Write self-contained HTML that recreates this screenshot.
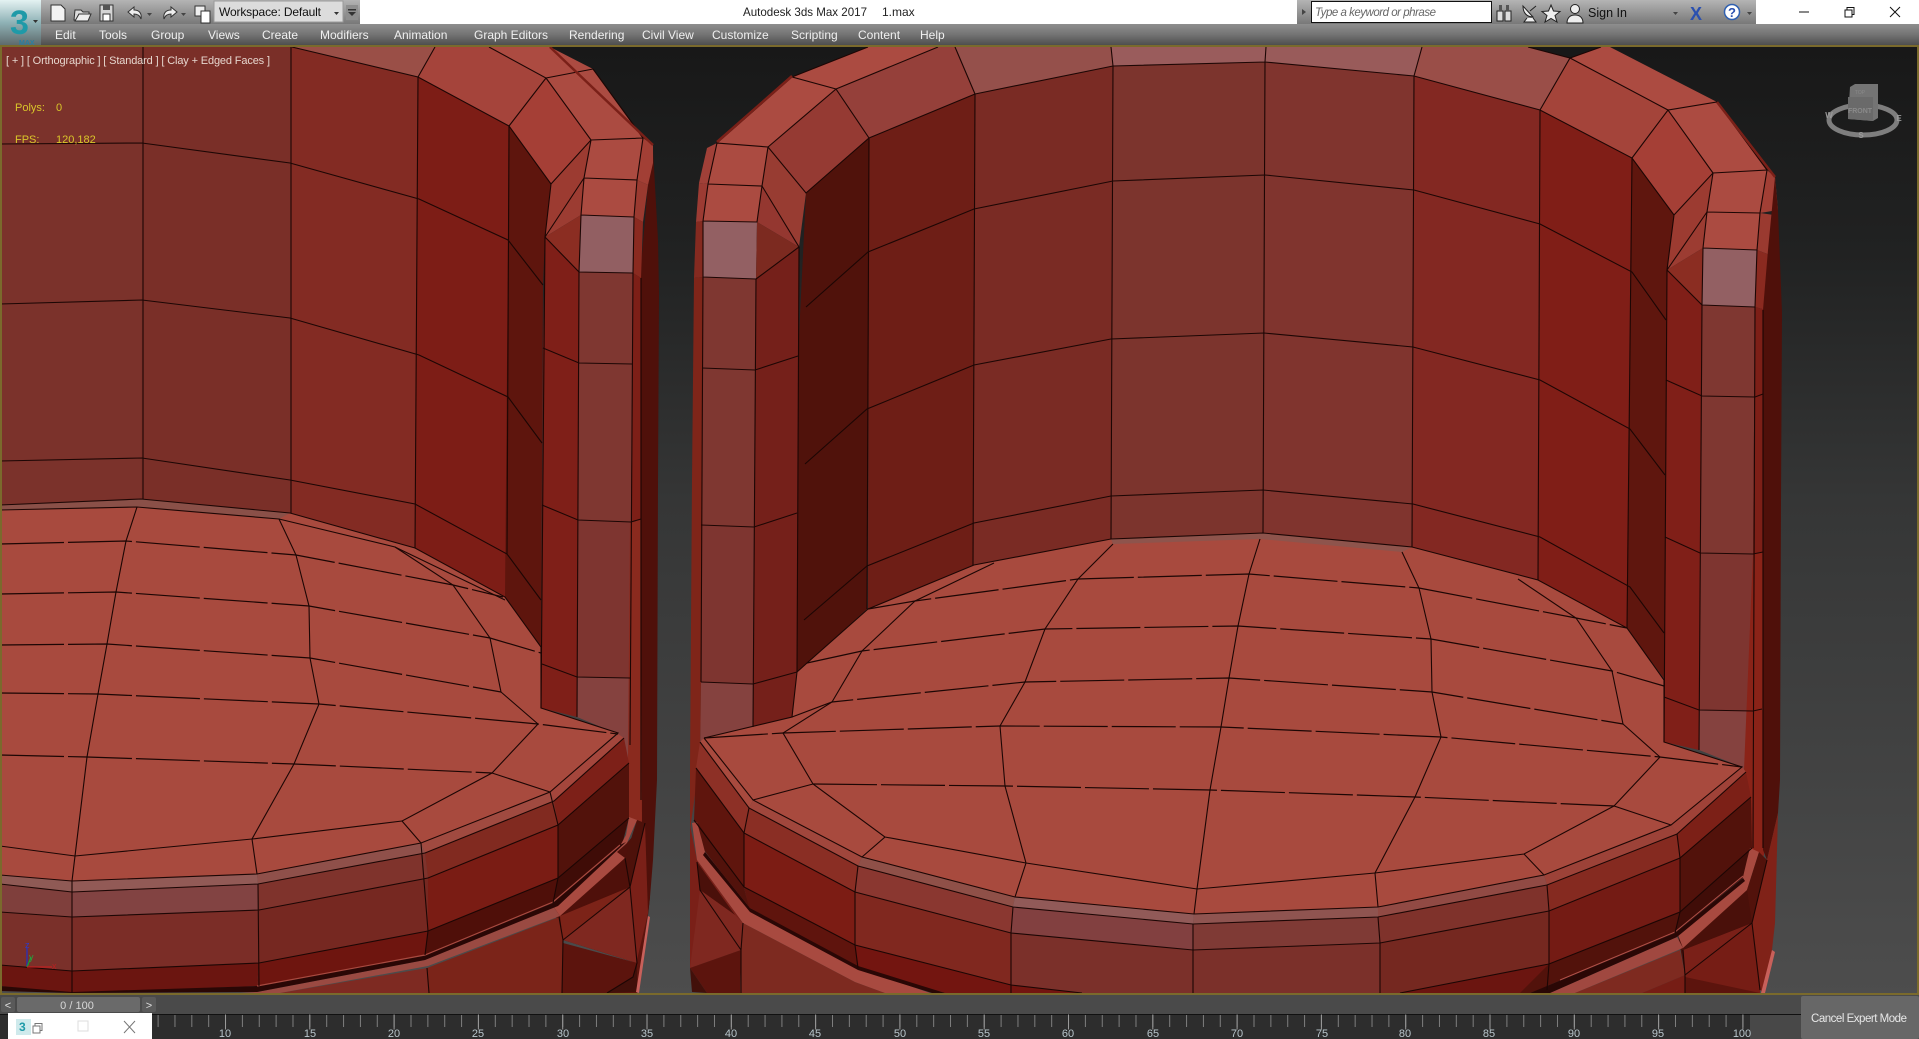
<!DOCTYPE html>
<html><head><meta charset="utf-8"><title>Autodesk 3ds Max 2017</title>
<style>
html,body{margin:0;padding:0;background:#4a4a4a;width:1919px;height:1039px;overflow:hidden}
svg{display:block;font-family:"Liberation Sans",sans-serif}
.l{fill:none;stroke:#1c0604;stroke-width:1.1}
.d{fill:none;stroke:#1c0604;stroke-width:1.2;stroke-dasharray:64 4}
.m{fill:#f0f0f0;font-size:12px}
.t{fill:#b9c6cc;font-size:11px;text-anchor:middle}
</style></head><body>
<svg width="1919" height="1039" viewBox="0 0 1919 1039" xmlns="http://www.w3.org/2000/svg">
<defs>
<linearGradient id="bg" x1="0" y1="0" x2="0" y2="1"><stop offset="0" stop-color="#181818"/><stop offset=".22" stop-color="#212222"/><stop offset=".48" stop-color="#353636"/><stop offset="1" stop-color="#4d4d4d"/></linearGradient>
<linearGradient id="mb" x1="0" y1="0" x2="0" y2="1"><stop offset="0" stop-color="#8e8e8e"/><stop offset=".5" stop-color="#747474"/><stop offset="1" stop-color="#4e4e4e"/></linearGradient>
<linearGradient id="tb" x1="0" y1="0" x2="0" y2="1"><stop offset="0" stop-color="#b4b4b4"/><stop offset="1" stop-color="#787878"/></linearGradient>
<linearGradient id="lg" x1="0" y1="0" x2="0" y2="1"><stop offset="0" stop-color="#e4f2f2"/><stop offset=".5" stop-color="#8fb2b6"/><stop offset="1" stop-color="#5e6a6c"/></linearGradient>
</defs>
<rect width="1919" height="1039" fill="#4a4a4a"/>
<rect x="0" y="45" width="1919" height="950" fill="url(#bg)"/>

<!-- LEFT CHAIR walls -->
<polygon fill="#7b322b" points="0,47 143,47 143,499 0,505"/>
<polygon fill="#7a2f28" points="143,47 291,47 291,513 141,499"/>
<polygon fill="#832b23" points="291,47 418,77 415,548 291,513"/>
<polygon fill="#7d1d16" points="418,77 509,126 507,554 505,597 415,548"/>
<polygon fill="#5e150d" points="509,126 551,184 545,237 543,285 541,650 505,597"/>
<polygon fill="#9a4f47" points="291,47 435,47 418,77"/>
<polygon fill="#a5443b" points="418,77 435,47 489,47 546,78 509,126"/>
<polygon fill="#ac4b41" points="489,47 550,47 593,69 546,78"/>
<polygon fill="#a53f36" points="509,126 546,78 591,140 551,184"/>
<polygon fill="#ab4b41" points="546,78 593,69 643,138 591,140"/>
<polygon fill="#7f1f18" points="545,237 579,272 577,717 541,708 543,348"/>
<polygon fill="#9c3b31" points="551,184 591,140 584,178 545,237"/>
<polygon fill="#9c3c32" points="545,237 584,178 581,215"/>
<polygon fill="#8b2d22" points="545,237 581,215 579,272"/>
<polygon fill="#ab4b41" points="591,140 643,138 637,180 584,178"/>
<polygon fill="#ab4b41" points="584,178 637,180 634,217 581,215"/>
<polygon fill="#925f62" points="581,215 634,217 633,273 579,272"/>
<polygon fill="#7f3731" points="579,272 633,273 631,522 578,520"/>
<polygon fill="#7e3530" points="578,520 631,522 630,678 577,677"/>
<polygon fill="#85423f" points="577,677 630,678 632,770 618,734 577,717"/>
<polygon fill="#4f100a" points="648,185 653,150 658,240 659,293 658,480 657,780 653,860 650,897 648,915 640,850 640,278"/>
<polygon fill="#a23f35" points="637,180 643,138 653,145 653,163 648,185"/>
<polygon fill="#9a3a30" points="634,217 637,180 648,185 643,222"/>
<polygon fill="#8a2a20" points="633,273 634,217 643,222 641,278"/>
<polygon fill="#7d1f17" points="631,522 633,273 641,278 641,519"/>
<polygon fill="#8a2a1e" points="630,522 641,519 642,825 628,820 628,760"/>
<!-- left seat -->
<polygon fill="#a84a3e" points="0,505 141,499 290,513 415,548 505,597 541,647 541,708 618,733 550,792 421,843 257,874 72,881 0,875"/>
<polygon fill="#8a5048" points="0,505 141,499 290,513 279,519 137,507 0,510"/>
<!-- left rims -->
<polygon fill="#8f5a55" points="0,875 72,881 72,892 0,884"/><polygon fill="#925a56" points="72,881 257,874 258,884 72,892"/><polygon fill="#8f504a" points="257,874 421,843 425,853 258,884"/><polygon fill="#a04a40" points="421,843 550,792 554,801 425,853"/><polygon fill="#a4463c" points="550,792 618,734 624,738 554,801"/>
<polygon fill="#7f3f3c" points="0,884 72,892 72,917 0,912"/><polygon fill="#824342" points="72,892 258,884 259,910 72,917"/><polygon fill="#7f332c" points="258,884 425,853 428,878 259,910"/><polygon fill="#812a20" points="425,853 554,801 558,825 428,878"/><polygon fill="#7d2018" points="554,801 624,738 629,763 558,825"/>
<polygon fill="#7a302a" points="0,912 72,917 72,971 0,965"/><polygon fill="#7b2d27" points="72,917 259,910 259,963 72,971"/><polygon fill="#762821" points="259,910 428,878 428,931 259,963"/><polygon fill="#7a1c14" points="428,878 558,825 558,878 428,931"/><polygon fill="#52120b" points="558,825 629,763 629,818 558,878"/>
<polygon fill="#6b1510" points="0,965 72,971 259,963 257,986 72,993 0,986"/><polygon fill="#6e150f" points="259,963 428,931 425,955 257,986"/><polygon fill="#4f0f09" points="428,931 558,878 553,903 425,955"/><polygon fill="#3f0c07" points="558,878 629,818 622,845 553,903"/>
<!-- left base -->
<polygon fill="#4f100a" points="553,906 625,845 645,823 650,897 648,915 637,963 563,940"/>
<polygon fill="#5c140d" points="630,887 648,913 637,993 607,993 633,977"/>
<polygon fill="#7e2a22" points="280,993 427,968 429,993"/>
<polygon fill="#7b2419" points="429,993 427,968 559,917 563,940 562,993"/>
<polygon fill="#7c2318" points="560,916 630,887 563,940"/>
<polygon fill="#4f100a" points="625,858 630,887 570,910 560,916"/>
<polygon fill="#7f2820" points="563,940 630,887 637,963"/>
<polygon fill="#5c140d" points="563,943 637,963 633,977 607,993 562,993"/>
<polygon fill="#42100a" points="637,963 637,992 607,993 633,977"/>
<polygon fill="#7a2018" points="630,887 645,823 648,913 637,960"/>
<polygon fill="#4d110a" points="645,823 630,887 625,858 637,820"/>
<polygon fill="#a84a40" points="629,817 637,820 627,843 617,852 625,858 560,916 553,906 620,846 626,835"/>
<polygon fill="#9a4a42" points="553,906 560,916 428,966 280,993 240,993 257,992 425,960"/>
<polygon fill="#2a0705" points="0,986 72,992 257,986 425,955 553,903 620,845 626,842 558,906 425,960 257,992 72,993 0,991"/>
<path d="M257 986L425 955L553 902L620 845" fill="none" stroke="#a84a40" stroke-width="1.200"/>
<polygon fill="#c8605a" points="648,916 650,917 639,993 636,992"/>
<!-- left lines -->
<g class="l">
<path d="M143 47V499M291 47V513M418 77L415 548M509 126L507 554M545 237L541 708M579 272L577 717M633 273L630 745M641 278V800"/>
<path d="M292 47L418 77L509 126M418 77L435 47M489 47L546 78L509 126M546 78L593 69M546 78L591 140L551 184L509 126M591 140L643 138M593 69L643 138M591 140L584 178L581 215L579 272M643 138L637 180L634 217L633 273M584 178L637 180M581 215L634 217M579 272L633 273M584 178L545 237L551 184M545 237L579 272M550 47L653 145"/>
<path d="M0 144L142 143L290 163L419 199L508 240L543 285M0 304L142 300L290 318L419 355L508 397L542 443M0 461L142 458L290 480L415 504L507 554L541 600M543 348L579 363L632 364M542 505L578 520L631 522L641 519M542 664L577 677L630 678"/>
<path d="M0 505L141 499L290 513L415 548L505 597L541 647V708L618 733L550 792L421 843L257 874L72 881L0 875"/>
<path d="M137 507L126 541L116 592L107 644L98 694L87 757L75 856L72 881M279 519L296 555L309 606L310 658L319 704L294 764L252 839L257 874M395 547L453 585L490 638L501 692L538 724L492 773L402 821L421 843"/>
<path d="M492 773L550 792M0 846L75 856L252 839L402 821M0 884L72 892L258 884L425 853L554 801L624 738M0 912L72 917L259 910L428 878L558 825L629 763M0 965L72 971L259 963L428 931L558 878L629 818M72 881V993M258 884L259 986M421 843L428 931L425 955M427 968L429 993M550 792L558 825V878L553 903M559 917L563 940L562 993M563 940L630 887M630 887L637 963L633 977L607 993M625 858L630 887L645 823"/>
<path d="M0 510L137 507L279 519L395 547L505 600"/>
</g>
<g class="d">
<path d="M0 544L126 541L296 555L453 585L503 597M0 594L116 592L309 606L490 638L541 653M0 645L107 644L310 658L501 692M0 693L98 694L319 704L538 724L618 734M0 755L87 757L294 764L492 773"/>
</g>

<!-- RIGHT CHAIR -->
<polygon fill="#50120b" points="806,193 869,138 867,609 807,663 795,715 798,356"/>
<polygon fill="#6e1e16" points="869,138 975,94 973,565 868,609"/>
<polygon fill="#7a2b24" points="975,94 1113,66 1111,539 973,565"/>
<polygon fill="#7c342d" points="1113,66 1265,62 1263,533 1111,539"/>
<polygon fill="#80342e" points="1265,62 1414,76 1412,547 1263,533"/>
<polygon fill="#832822" points="1414,76 1540,110 1538,580 1412,547"/>
<polygon fill="#801e17" points="1540,110 1632,158 1627,628 1538,580"/>
<polygon fill="#5f160e" points="1632,158 1674,215 1667,270 1665,680 1627,628"/>
<!-- top -->
<polygon fill="#95403a" points="836,89 869,138 975,94 955,47 938,47"/>
<polygon fill="#ab4b41" points="792,77 868,47 938,47 836,89"/>
<polygon fill="#95504b" points="955,47 975,94 1113,66 1111,47"/>
<polygon fill="#9a5c5c" points="1113,66 1265,62 1266,47 1111,47"/>
<polygon fill="#995b5a" points="1265,62 1414,76 1422,47 1266,47"/>
<polygon fill="#9a4e48" points="1414,76 1540,110 1570,58 1528,47 1422,47"/>
<polygon fill="#a4443a" points="1540,110 1632,158 1668,110 1570,58"/>
<polygon fill="#ac4b41" points="1570,58 1601,47 1610,47 1717,102 1668,110"/>
<polygon fill="#953a33" points="836,89 768,147 806,193 869,138"/>
<polygon fill="#ab4b41" points="836,89 792,77 717,143 768,147"/>
<polygon fill="#ab4b41" points="717,143 768,147 762,186 708,184"/>
<polygon fill="#ab4b41" points="708,184 762,186 757,222 703,221"/>
<polygon fill="#936063" points="703,221 757,222 756,279 703,277"/>
<polygon fill="#7f3731" points="703,277 756,279 754,527 701,525"/>
<polygon fill="#7e3530" points="701,525 754,527 753,684 701,682"/>
<polygon fill="#85423f" points="701,682 753,684 753,727 704,738 700,760"/>
<polygon fill="#983c32" points="768,147 806,193 799,247 762,186"/>
<polygon fill="#943730" points="762,186 799,247 757,222"/>
<polygon fill="#7c2a20" points="757,222 799,247 756,279"/>
<polygon fill="#75201a" points="756,279 799,247 797,672 792,717 753,727"/>
<polygon fill="#a04038" points="717,143 707,148 699,183 708,184"/>
<polygon fill="#9c3b33" points="708,184 699,183 696,222 703,221"/>
<polygon fill="#852a20" points="703,221 696,222 694,278 703,277"/>
<polygon fill="#7f2519" points="703,277 694,278 692,480 690,770 690,830 700,760 701,682"/>
<!-- right arm -->
<polygon fill="#801f18" points="1667,270 1702,305 1699,750 1664,742"/>
<polygon fill="#a53f36" points="1632,158 1668,110 1713,173 1674,215"/>
<polygon fill="#ac4b41" points="1668,110 1717,102 1767,170 1713,173"/>
<polygon fill="#ab4b41" points="1713,173 1767,170 1760,213 1707,212"/>
<polygon fill="#ab4b41" points="1707,212 1760,213 1757,250 1703,248"/>
<polygon fill="#936063" points="1703,248 1757,250 1755,307 1702,305"/>
<polygon fill="#7f3731" points="1702,305 1755,307 1753,554 1700,553"/>
<polygon fill="#7e3530" points="1700,553 1753,554 1753,711 1699,710"/>
<polygon fill="#85423f" points="1699,710 1753,711 1752,790 1742,767 1699,750"/>
<polygon fill="#9c3b31" points="1674,215 1713,173 1707,212 1667,270"/>
<polygon fill="#9c3c32" points="1667,270 1707,212 1703,248"/>
<polygon fill="#8b2d22" points="1667,270 1703,248 1702,305"/>
<polygon fill="#a23f35" points="1767,170 1775,177 1778,210 1760,213"/>
<polygon fill="#9a3a30" points="1760,213 1774,215 1770,255 1757,250"/>
<polygon fill="#8a2a20" points="1757,250 1770,255 1766,310 1755,307"/>
<polygon fill="#7d1f17" points="1755,307 1766,310 1763,552 1753,554"/>
<polygon fill="#8a2318" points="1744,770 1753,554 1763,552 1764,856 1748,850"/>
<polygon fill="#4f100a" points="1775,177 1778,210 1782,313 1781,500 1780,780 1778,813 1767,860 1763,850 1763,310 1768,250"/>
<!-- seat -->
<polygon fill="#a84a3e" points="704,738 792,717 797,672 807,663 868,609 974,565 1111,539 1263,533 1412,547 1538,580 1627,628 1664,680 1664,742 1742,767 1671,825 1544,875 1378,907 1194,914 1015,897 862,857 753,800"/>
<polygon fill="#8e544c" points="1111,539 1263,533 1412,547 1402,552 1260,539 1113,544"/>
<!-- rims -->
<polygon fill="#a84a3e" points="704,738 753,800 749,808 700,742"/><polygon fill="#a0463c" points="753,800 862,857 858,866 749,808"/><polygon fill="#8f5048" points="862,857 1015,897 1013,907 858,866"/><polygon fill="#915a58" points="1015,897 1194,914 1193,924 1013,907"/><polygon fill="#8f5450" points="1194,914 1378,907 1378,917 1193,924"/><polygon fill="#914a44" points="1378,907 1544,875 1547,885 1378,917"/><polygon fill="#9c4238" points="1544,875 1671,825 1677,834 1547,885"/><polygon fill="#9f4238" points="1671,825 1742,767 1746,772 1677,834"/>
<polygon fill="#8d3026" points="700,742 749,808 744,833 696,768"/><polygon fill="#8a2e24" points="749,808 858,866 855,892 744,833"/><polygon fill="#8a3730" points="858,866 1013,907 1011,933 855,892"/><polygon fill="#824040" points="1013,907 1193,924 1193,950 1011,933"/><polygon fill="#7f3a35" points="1193,924 1378,917 1380,943 1193,950"/><polygon fill="#7f322b" points="1378,917 1547,885 1549,911 1380,943"/><polygon fill="#852a20" points="1547,885 1677,834 1680,858 1549,911"/><polygon fill="#7c2017" points="1677,834 1746,772 1751,797 1680,858"/>
<polygon fill="#5f150d" points="696,768 744,833 744,887 694,820"/><polygon fill="#7c1c14" points="744,833 855,892 855,945 744,887"/><polygon fill="#80281f" points="855,892 1011,933 1011,985 855,945"/><polygon fill="#7b302a" points="1011,933 1193,950 1193,993 1011,993"/><polygon fill="#7b302a" points="1193,950 1380,943 1380,993 1193,993"/><polygon fill="#752820" points="1380,943 1549,911 1549,964 1400,993 1380,993"/><polygon fill="#741b14" points="1549,911 1680,858 1680,912 1549,964"/><polygon fill="#52120b" points="1680,858 1751,797 1752,848 1680,912"/>
<polygon fill="#731510" points="1011,985 1082,993 1011,993"/>
<polygon fill="#731510" points="855,945 1011,985 1011,993 945,993 858,968"/>
<polygon fill="#6b1510" points="1400,993 1549,964 1547,990 1520,993"/>
<polygon fill="#52120b" points="694,820 744,887 749,910 696,830"/>
<polygon fill="#5f140d" points="744,887 855,945 858,968 749,910"/>
<polygon fill="#52120b" points="1549,964 1680,912 1675,933 1530,993 1520,993"/>
<polygon fill="#400d08" points="1680,912 1752,848 1745,876 1675,933"/>
<!-- right chair bottom left -->
<polygon fill="#7a2018" points="690,825 697,860 743,923 741,950 690,968"/>
<polygon fill="#4a100a" points="697,862 735,915 700,890"/>
<polygon fill="#7f2820" points="700,890 735,915 743,923 741,950 690,968"/>
<polygon fill="#5c140d" points="690,968 741,950 740,993 707,993"/>
<polygon fill="#42100a" points="690,968 707,993 692,992"/>
<polygon fill="#52120b" points="698,823 745,893 750,910 704,850"/>
<polygon fill="#7d2a20" points="743,923 855,982 885,993 740,993 741,950"/>
<polygon fill="#a84a40" points="692,823 697,822 705,852 750,908 858,968 930,993 885,993 855,982 743,923 697,860"/>
<polygon fill="#2a0705" points="705,852 750,908 858,966 945,993 932,993 858,970 750,912 703,855"/>
<!-- right chair bottom right -->
<polygon fill="#4a100a" points="1678,935 1747,888 1760,880 1767,860 1752,923 1685,975"/>
<polygon fill="#a04840" points="1550,993 1677,937 1683,948 1575,993"/>
<polygon fill="#7e2a20" points="1575,993 1680,950 1685,975 1642,993"/>
<polygon fill="#761d15" points="1642,993 1685,975 1752,923 1760,990 1760,993"/>
<polygon fill="#7a2018" points="1683,950 1752,923 1685,975"/>
<polygon fill="#5c140d" points="1685,977 1760,993 1685,993"/>
<polygon fill="#4a100a" points="1683,948 1747,892 1752,923 1683,950"/>
<polygon fill="#a84a40" points="1750,848 1759,852 1747,890 1683,948 1678,935 1738,885 1743,877 1747,860"/>
<polygon fill="#2a0705" points="1530,993 1675,933 1743,878 1745,881 1677,937 1550,993"/>
<path d="M1560 980L1675 932L1743 876" fill="none" stroke="#b05048" stroke-width="1"/>
<polygon fill="#52120b" points="1759,852 1767,860 1752,923 1747,890"/>
<polygon fill="#802218" points="1752,923 1767,860 1778,813 1775,923 1772,950 1763,992 1760,990"/>
<polygon fill="#c8605a" points="1772,950 1775,952 1765,993 1761,993"/>
<!-- right lines -->
<g class="l">
<path d="M869 138L867 609M975 94L973 565M1113 66L1111 539M1265 62L1263 533M1414 76L1412 547M1540 110L1538 580M1632 158L1627 628M1667 270L1664 742M1702 305L1699 750M1755 307L1753 848M1763 310V848M799 247L797 672M756 279L753 727M703 277L701 682"/>
<path d="M975 94L1113 66L1265 62L1414 76L1540 110L1632 158L1674 215L1713 173L1668 110L1632 158M1540 110L1570 58L1668 110L1717 102L1767 170L1713 173L1707 212L1703 248L1702 305M1767 170L1760 213L1757 250L1755 307M1707 212L1760 213M1703 248L1757 250M1702 305L1755 307M1707 212L1667 270L1674 215M1667 270L1702 305M1414 76L1422 47M1113 66L1111 47M1265 62L1266 47M1601 47L1570 58L1528 47M1717 102L1775 177"/>
<path d="M975 94L869 138L806 193L768 147L717 143L792 77L836 89L768 147M869 138L836 89L938 47M955 47L975 94M708 184L762 186L768 147M703 221L757 222L762 186L799 247L756 279M703 277L756 279M792 77L868 47M717 143L708 184L703 221L703 277"/>
<path d="M806 307L868 252L974 209L1113 181L1265 175L1414 190L1540 224L1632 272L1666 320M805 464L867 409L974 365L1111 339L1264 333L1413 347L1540 380L1630 429L1665 475M804 620L867 566L974 523L1111 496L1263 490L1413 504L1540 537L1630 587L1664 633"/>
<path d="M1666 380L1702 396L1755 397L1763 394M1665 537L1700 553L1753 554L1763 552M1664 697L1699 710L1753 711L1762 709M701 525L754 527L797 513M701 682L753 684L797 672M702 368L755 370L798 356"/>
<path d="M868 609L974 565L1111 539M797 672L807 663L868 609"/>
<path d="M704 738L792 717L797 672M704 738L753 800L862 857L1015 897L1194 914L1378 907L1544 875L1671 825L1742 767L1664 742V680L1627 628L1538 580L1412 547L1263 533L1111 539"/>
<path d="M1113 544L1078 579L1045 629L1025 682L1000 726L1005 786L1026 863L1015 897M1260 539L1249 574L1238 626L1229 678L1221 727L1210 790L1197 889L1194 914M994 563L915 601L862 651L832 702L783 733L813 784L885 837L862 857M753 800L813 784M885 837L1026 863L1197 889L1375 873L1524 854L1614 806L1671 825M1524 854L1544 875"/>
<path d="M1402 552L1419 588L1431 639L1432 692L1441 737L1415 797L1375 873L1378 907M1518 579L1576 618L1612 671L1623 724L1660 757L1614 806"/>
<path d="M700 742L749 808L858 866L1013 907L1193 924L1378 917L1547 885L1677 834L1746 772M696 768L744 833L855 892L1011 933L1193 950L1380 943L1549 911L1680 858L1751 797M694 820L744 887L855 945L1011 985L1082 993M1400 993L1549 964L1680 912L1752 848"/>
<path d="M749 808L744 833V887M858 866L855 892V945L858 968M1013 907L1011 933V993M1193 924V993M1378 917L1380 943V993M1547 885L1549 911V964L1547 990M1677 834L1680 858L1680 912L1675 933M743 923L741 950V993M741 950L700 890L697 862M1683 950L1685 975V993M1685 975L1752 923L1760 990M1752 923L1767 860"/>
</g>
<g class="d">
<path d="M868 609L915 601L1078 579L1249 574L1419 588L1576 618L1627 628M807 663L862 651L1045 629L1238 626L1431 639L1612 671L1664 686M792 717L832 702L1025 682L1229 678L1432 692L1623 724M704 738L783 733L1000 726L1221 727L1441 737L1660 757L1742 767M813 784L1005 786L1210 790L1415 797L1614 806"/>
</g>
<path d="M792 76L717 142M1717 102L1775 177M550 47L653 145" stroke="#7a2018" stroke-width="2.500" fill="none"/>

<!-- viewport border -->
<rect x="0" y="45" width="1919" height="2" fill="#7a6a2c"/>
<rect x="0" y="45" width="2" height="950" fill="#7a6a2c"/>
<rect x="1917" y="45" width="2" height="950" fill="#7a6a2c"/>
<rect x="0" y="993" width="1919" height="2" fill="#7a6a2c"/>

<!-- labels -->
<text x="6" y="64" fill="#e6d6ce" font-size="11" textLength="264" lengthAdjust="spacing">[ + ] [ Orthographic ] [ Standard ] [ Clay + Edged Faces ]</text>
<text x="15" y="111" fill="#d9c62a" font-size="11">Polys:</text><text x="56" y="111" fill="#d9c62a" font-size="11">0</text>
<text x="15" y="143" fill="#d9c62a" font-size="11">FPS:</text><text x="56" y="143" fill="#d9c62a" font-size="11">120,182</text>

<!-- ViewCube -->
<ellipse cx="1863" cy="120" rx="34" ry="15" fill="none" stroke="#7e7e7e" stroke-width="5"/>
<polygon fill="#747474" points="1850,87 1855,84 1878,84 1878,118 1873,121 1848,119"/>
<polygon fill="#6a6a6a" points="1848,97 1873,97 1873,121 1848,119"/>
<text x="1860" y="113" fill="#8a8a8a" font-size="7" font-weight="bold" text-anchor="middle">FRONT</text>
<text x="1860" y="94" fill="#8a8a8a" font-size="5" text-anchor="middle">TOP</text>
<text x="1829" y="118" fill="#9a9a9a" font-size="8" font-weight="bold" text-anchor="middle">W</text>
<text x="1899" y="121" fill="#9a9a9a" font-size="8" font-weight="bold" text-anchor="middle">E</text>
<text x="1861" y="138" fill="#9a9a9a" font-size="8" font-weight="bold" text-anchor="middle">S</text>

<!-- gizmo -->
<path d="M27 967V948" stroke="#2030c8" stroke-width="1.200"/><path d="M27 967L31 957" stroke="#18a030" stroke-width="1.200"/><path d="M27 967H52" stroke="#c02020" stroke-width="1.200"/>
<text x="25" y="948" fill="#2a3ad0" font-size="9">z</text><text x="29" y="960" fill="#2aa040" font-size="9">y</text><text x="52" y="969" fill="#b82020" font-size="9">x</text>

<!-- Title bar -->
<rect x="0" y="0" width="1919" height="24" fill="#fff"/>
<rect x="41" y="0" width="319" height="24" fill="url(#tb)"/>
<rect x="1297" y="0" width="459" height="24" fill="url(#tb)"/>
<rect x="0" y="24" width="1919" height="21" fill="url(#mb)"/>
<rect x="0" y="0" width="41" height="45" fill="url(#lg)"/>
<text x="10" y="34" fill="#1f9aa8" font-size="34" font-weight="bold">3</text>
<text x="19" y="45" fill="#2a7fa0" font-size="7" font-weight="bold">MAX</text>
<path d="M33 20h5l-2.500 3z" fill="#333"/>

<!-- quick access icons -->
<path d="M51 5h10l4 4v12H51z" fill="#f2f2f2" stroke="#333"/>
<path d="M75 10h6l2 2h6v2h-10l-3 6h-2z" fill="#ddd" stroke="#333"/><path d="M79 14h12l-3 7H75z" fill="#eee" stroke="#333"/>
<rect x="100" y="5" width="13" height="16" fill="#d4d4d4" stroke="#333"/><rect x="103" y="5" width="7" height="5" fill="#555"/><rect x="103" y="14" width="7" height="7" fill="#fff" stroke="#333"/>
<path d="M134 7l-6 5 6 5v-3c4 0 6 2 7 5 1-6-2-9-7-9z" fill="#eee" stroke="#333"/>
<path d="M147 13h5l-2.500 3z" fill="#444"/>
<path d="M171 7l6 5-6 5v-3c-4 0-6 2-7 5-1-6 2-9 7-9z" fill="#eee" stroke="#333"/>
<path d="M181 13h5l-2.500 3z" fill="#444"/>
<rect x="195" y="6" width="10" height="10" fill="#eee" stroke="#333"/><rect x="201" y="11" width="9" height="12" fill="#fff" stroke="#333"/>
<rect x="214" y="1" width="129" height="21" fill="#dcdcdc" stroke="#9a9a9a"/>
<text x="219" y="16" fill="#111" font-size="12" textLength="102" lengthAdjust="spacing">Workspace: Default</text>
<path d="M334 12h5l-2.500 3z" fill="#333"/>
<rect x="346" y="5" width="12" height="15" fill="#8e8e8e"/>
<path d="M348 9h8v1.500h-8zM348 12h8l-4 4z" fill="#333"/>

<text x="743" y="16" fill="#222" font-size="12" textLength="124" lengthAdjust="spacingAndGlyphs">Autodesk 3ds Max 2017</text>
<text x="882" y="16" fill="#222" font-size="12">1.max</text>

<!-- menu -->
<text class="m" x="55" y="39">Edit</text><text class="m" x="99" y="39">Tools</text><text class="m" x="151" y="39">Group</text><text class="m" x="208" y="39">Views</text><text class="m" x="262" y="39">Create</text><text class="m" x="320" y="39">Modifiers</text><text class="m" x="394" y="39">Animation</text><text class="m" x="474" y="39">Graph Editors</text><text class="m" x="569" y="39">Rendering</text><text class="m" x="642" y="39">Civil View</text><text class="m" x="712" y="39">Customize</text><text class="m" x="791" y="39">Scripting</text><text class="m" x="858" y="39">Content</text><text class="m" x="920" y="39">Help</text>

<!-- search bar -->
<path d="M1302 9l4 3-4 3z" fill="#444"/>
<rect x="1311.500" y="1.500" width="180" height="21" fill="#fff" stroke="#111"/>
<text x="1315" y="16" fill="#666" font-size="11.500" font-style="italic" textLength="121" lengthAdjust="spacing">Type a keyword or phrase</text>
<path d="M1497 11h6v10h-6zM1505 11h6v10h-6z" fill="#ddd" stroke="#222"/><rect x="1499" y="5" width="3" height="6" fill="#555"/><rect x="1506" y="5" width="3" height="6" fill="#555"/>
<path d="M1523 6c0 7 4 11 10 11zM1527 18l-3 4h12l-3-4" fill="#eee" stroke="#222"/><path d="M1530 11l6-5" stroke="#222"/>
<polygon points="1551,5 1553.500,11 1560,11.500 1555,15.500 1557,22 1551,18.500 1545,22 1547,15.500 1542,11.500 1548.500,11" fill="#eee" stroke="#222"/>
<circle cx="1575" cy="9" r="4.500" fill="#eee" stroke="#222"/><path d="M1567 23c0-6 4-8 8-8s8 2 8 8z" fill="#eee" stroke="#222"/>
<text x="1588" y="17" fill="#111" font-size="12.500">Sign In</text>
<path d="M1673 12h5l-2.500 3z" fill="#444"/>
<text x="1690" y="20" fill="#2a50b0" font-size="18" font-weight="bold">X</text>
<circle cx="1732" cy="12" r="7.500" fill="#fff" stroke="#3060b0" stroke-width="1.500"/>
<text x="1732" y="17" fill="#2a50b0" font-size="13" font-weight="bold" text-anchor="middle">?</text>
<path d="M1747 12h5l-2.500 3z" fill="#444"/>

<!-- window controls -->
<path d="M1799 12h10" stroke="#111" stroke-width="1"/>
<rect x="1845" y="10" width="7" height="7" fill="none" stroke="#111"/><path d="M1847 10V7.500h7v7h-2" fill="none" stroke="#111"/>
<path d="M1890 7l10 10M1900 7l-10 10" stroke="#111" stroke-width="1"/>

<!-- time slider -->
<rect x="0" y="995" width="1919" height="19" fill="#4a4a4a"/>
<rect x="0" y="1014" width="1919" height="1" fill="#111"/>
<rect x="0" y="1015" width="1919" height="24" fill="#2d2d2d"/>
<rect x="1750" y="1015" width="169" height="24" fill="#484848"/>
<rect x="1" y="997" width="14" height="15" rx="2" fill="#5a5a5a"/>
<rect x="17" y="997" width="123" height="15" rx="2" fill="#6a6a6a"/>
<rect x="142" y="997" width="14" height="15" rx="2" fill="#5a5a5a"/>
<text x="8" y="1009" fill="#ddd" font-size="11" text-anchor="middle">&lt;</text>
<text x="149" y="1009" fill="#ddd" font-size="11" text-anchor="middle">&gt;</text>
<text x="77" y="1009" fill="#d8d8d8" font-size="11" text-anchor="middle">0 / 100</text>
<line x1="157.600" y1="1021" x2="1748" y2="1021" stroke="#7e7e7e" stroke-width="12" stroke-dasharray="1 15.860"/>
<line x1="225" y1="1022" x2="1748" y2="1022" stroke="#9a9a9a" stroke-width="15" stroke-dasharray="1 83.300"/>
<text class="t" x="225" y="1037">10</text><text class="t" x="310" y="1037">15</text><text class="t" x="394" y="1037">20</text><text class="t" x="478" y="1037">25</text><text class="t" x="563" y="1037">30</text><text class="t" x="647" y="1037">35</text><text class="t" x="731" y="1037">40</text><text class="t" x="815" y="1037">45</text><text class="t" x="900" y="1037">50</text><text class="t" x="984" y="1037">55</text><text class="t" x="1068" y="1037">60</text><text class="t" x="1153" y="1037">65</text><text class="t" x="1237" y="1037">70</text><text class="t" x="1322" y="1037">75</text><text class="t" x="1405" y="1037">80</text><text class="t" x="1489" y="1037">85</text><text class="t" x="1574" y="1037">90</text><text class="t" x="1658" y="1037">95</text><text class="t" x="1742" y="1037">100</text>
<rect x="1801" y="996" width="118" height="43" rx="2" fill="#676767"/>
<text x="1811" y="1022" fill="#e8e8e8" font-size="11.500" textLength="96" lengthAdjust="spacing">Cancel Expert Mode</text>

<!-- task thumbnail -->
<rect x="8" y="1013" width="144" height="26" fill="#fff"/>
<rect x="16" y="1019" width="15" height="16" fill="#cfeaec"/>
<text x="19" y="1031" fill="#1f9aa8" font-size="12" font-weight="bold">3</text>
<rect x="33" y="1026" width="7" height="7" fill="none" stroke="#777"/><path d="M35 1026v-2.500h7v7h-2" fill="none" stroke="#777"/>
<rect x="78" y="1021" width="10" height="10" fill="none" stroke="#ddd"/>
<path d="M124 1021l11 12M135 1021l-11 12" stroke="#777" stroke-width="1"/>
</svg>
</body></html>
